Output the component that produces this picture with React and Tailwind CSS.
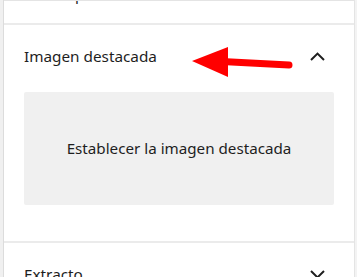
import React from "react";

function ChevronUp() {
  return (
    <svg width="15" height="9" viewBox="0 0 15 9" fill="none">
      <path d="M1 8 L7.5 1.6 L14 8" stroke="#1e1e1e" strokeWidth="2" />
    </svg>
  );
}
function ChevronDown() {
  return (
    <svg width="15" height="9" viewBox="0 0 15 9" fill="none">
      <path d="M1 1 L7.5 7.4 L14 1" stroke="#1e1e1e" strokeWidth="2" />
    </svg>
  );
}

export default function App() {
  return (
    <div
      className="w-[357px] h-[277px] overflow-hidden flex bg-white"
      style={{ fontFamily: '"Noto Sans", "Open Sans", sans-serif' }}
    >
      <div className="w-[3px] bg-[#f0f0f0] shrink-0" />
      <div className="w-[1px] bg-[#dcdcdc] shrink-0" />
      <div className="flex-1 flex flex-col border-t border-[#e4e4e4] relative">
        <div className="h-[22px] overflow-hidden shrink-0">
          <div className="mt-[-17px] pl-[71px] text-[15px] leading-[20px] text-[#1e1e1e]">p</div>
        </div>
        <div className="h-[2px] bg-[#ebebeb] shrink-0" />
        <div className="px-[20px] shrink-0">
          <div className="h-[62px] flex items-center justify-between pr-[9px] relative">
            <span className="text-[15.3px] text-[#1e1e1e]">Imagen destacada</span>
            <ChevronUp />
            <svg
              className="absolute left-[168px] top-[20px]"
              width="102"
              height="34"
              viewBox="0 0 102 34"
            >
              <path d="M0 16 L36 2 L36 32 Z" fill="#ff0000" />
              <path d="M30 16.5 L97 20" stroke="#ff0000" strokeWidth="7" strokeLinecap="round" />
            </svg>
          </div>
          <div className="mt-[5px] h-[113px] rounded-[2px] bg-[#f0f0f0] flex items-center justify-center">
            <span className="text-[15.2px] text-[#1e1e1e]">Establecer la imagen destacada</span>
          </div>
        </div>
        <div className="mt-[36px] h-[2px] bg-[#ebebeb] shrink-0" />
        <div className="px-[20px] shrink-0">
          <div className="h-[62px] flex items-center justify-between pr-[9px]">
            <span className="text-[15.3px] text-[#1e1e1e]">Extracto</span>
            <ChevronDown />
          </div>
        </div>
      </div>
      <div className="w-[1px] bg-[#e4e4e4] shrink-0" />
      <div className="w-[2px] bg-[#f3f3f3] shrink-0" />
    </div>
  );
}
